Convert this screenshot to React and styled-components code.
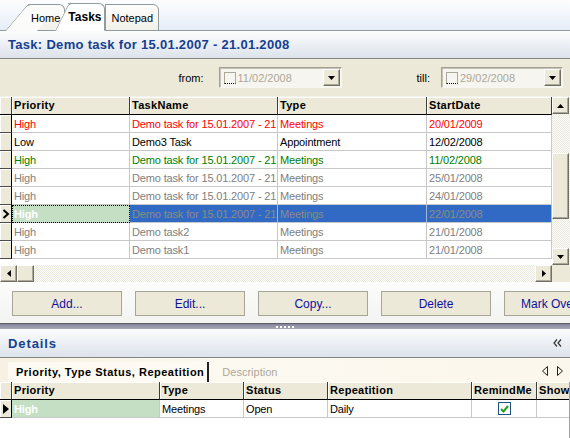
import React from 'react';
import styled, { createGlobalStyle, css } from 'styled-components';

const GlobalStyle = createGlobalStyle`
  body {
    margin: 0;
    font-family: "Liberation Sans", Arial, sans-serif;
    font-size: 11px;
    background: #fff;
  }
`;

const Window = styled.div`
  width: 570px;
  height: 438px;
  overflow: hidden;
  display: flex;
  flex-direction: column;
  background: #fff;
`;

/* ---------- document tabs ---------- */

const TabStrip = styled.div`
  height: 30px;
  flex-shrink: 0;
  display: flex;
  align-items: flex-end;
  padding-left: 28px;
  background: linear-gradient(#fdfdfe, #e6edf8);
  border-bottom: 1px solid #919b9c;
`;

const Tab = styled.div`
  position: relative;
  height: ${(p) => (p.$active ? 26 : 25)}px;
  margin-bottom: -1px;
  margin-left: ${(p) => p.$offset ?? 0}px;
  padding: 0 ${(p) => p.$padRight ?? 4}px 0 ${(p) => p.$padLeft ?? 3}px;
  display: flex;
  align-items: center;
  border: 1px solid #919b9c;
  border-left: ${(p) => (p.$reach ? 'none' : '1px solid #919b9c')};
  border-bottom: ${(p) => (p.$active ? '1px solid #fff' : '1px solid #919b9c')};
  border-radius: 0 6px 0 0;
  background: ${(p) => (p.$active ? '#fff' : 'linear-gradient(#fefefe, #f1f0ea)')};
  z-index: ${(p) => (p.$active ? 3 : p.$z || 1)};
  font-size: ${(p) => (p.$active ? 12 : 11)}px;
  font-weight: ${(p) => (p.$active ? 700 : 400)};
  color: #000;

  ${(p) =>
    p.$reach &&
    css`
      &::before {
        content: '';
        position: absolute;
        left: -${p.$reach}px;
        top: -1px;
        bottom: -1px;
        width: ${p.$reach + 8}px;
        background: ${p.$active ? '#fff' : '#fbfbf9'};
        border-left: 1px solid #919b9c;
        border-top: 1px solid #919b9c;
        border-top-left-radius: 4px;
        transform: skewX(-${Math.round((Math.atan(p.$reach / 27) * 180) / Math.PI)}deg);
        transform-origin: bottom left;
      }
    `}
`;

const TabLabel = styled.span`
  position: relative;
  z-index: 1;
`;

/* ---------- captions ---------- */

const Caption = styled.div`
  height: ${(p) => p.$h}px;
  flex-shrink: 0;
  display: flex;
  align-items: center;
  justify-content: space-between;
  padding: 0 8px;
  background: linear-gradient(#fbfcfd, #dde3ec);
  border-bottom: 1px solid #858585;
  color: #16408f;
  font-size: 13px;
  font-weight: 700;
`;

const CaptionText = styled.span`
  letter-spacing: ${(p) => p.$spacing || 0}px;
`;

/* ---------- filter ---------- */

const FilterBar = styled.div`
  height: 37px;
  flex-shrink: 0;
  display: flex;
  align-items: center;
  justify-content: flex-end;
  padding-right: 7px;
  background: #ece9d8;
`;

const FilterLabel = styled.span`
  margin-left: ${(p) => p.$gap || 0}px;
  margin-right: ${(p) => p.$right}px;
  font-size: 11px;
  color: #000;
`;

const DateBox = styled.div`
  width: ${(p) => p.$w}px;
  height: 21px;
  box-sizing: border-box;
  display: flex;
  align-items: center;
  padding: 0 1px 0 4px;
  background: #f6f5ef;
  border: 1px solid;
  border-color: #a3a196 #f7f6f1 #f7f6f1 #a3a196;
  box-shadow: inset 1px 1px 0 #c6c3b5;
  color: #aca899;
  font-size: 11px;
`;

const DateCheck = styled.span`
  width: 10px;
  height: 10px;
  margin-right: 2px;
  border: 1px solid #aca899;
  background: #f6f5ef;
  flex-shrink: 0;
  border-bottom: 1px dotted #000;
`;

const DateText = styled.span`
  flex: 1;
  padding-top: 1px;
`;

const bevel = css`
  box-sizing: border-box;
  background: #ece9d8;
  border: 1px solid;
  border-color: #fff #716f64 #716f64 #fff;
  box-shadow: inset -1px -1px 0 #aca899;
  display: flex;
  align-items: center;
  justify-content: center;
  flex-shrink: 0;
`;

const DropButton = styled.span`
  ${bevel};
  width: 17px;
  height: 17px;
`;

/* ---------- main grid ---------- */

const GridFrame = styled.div`
  height: 186px;
  flex-shrink: 0;
  display: flex;
  flex-direction: column;
  border-top: 1px solid #f2f1ea;
  box-sizing: border-box;
`;

const GridBody = styled.div`
  height: 168px;
  display: flex;
`;

const Table = styled.div`
  width: ${(p) => p.$w}px;
  background: #fff;
  overflow: hidden;
  flex-shrink: 0;
`;

const Row = styled.div`
  display: grid;
  grid-template-columns: ${(p) => p.$cols};
  height: 18px;
`;

const HeaderCell = styled.div`
  box-sizing: border-box;
  height: 18px;
  padding: 0 2px;
  line-height: 17px;
  font-weight: 700;
  font-size: 11px;
  letter-spacing: 0.3px;
  color: #000;
  background: #ece9d8;
  border-right: 1px solid #3c3c3c;
  border-bottom: 1px solid #000;
  box-shadow: inset 1px 1px 0 #fff;
  white-space: nowrap;
  overflow: hidden;
`;

const RowHead = styled.div`
  box-sizing: border-box;
  height: 18px;
  background: #ece9d8;
  border-right: 1px solid #000;
  border-bottom: 1px solid #4a4a4a;
  box-shadow: inset 1px 1px 0 #fff;
  display: flex;
  align-items: center;
  justify-content: center;
`;

const Cell = styled.div`
  box-sizing: border-box;
  height: 18px;
  padding: 0 ${(p) => (p.$center ? 0 : 2)}px;
  line-height: 18px;
  font-size: 11px;
  white-space: nowrap;
  overflow: hidden;
  border-right: 1px solid #c8c8c8;
  border-bottom: 1px solid #c8c8c8;
  color: ${(p) => p.$color || '#000'};
  background: #fff;
  letter-spacing: -0.15px;
  ${(p) => p.$center && css`display: flex; align-items: center; justify-content: center;`}

  ${(p) =>
    p.$mode === 'focus' &&
    css`
      background: #c4dfc4;
      color: #fff;
      font-weight: 700;
      outline: 1px dotted #000;
      outline-offset: -1px;
    `}
  ${(p) =>
    p.$mode === 'green' &&
    css`
      background: #c4dfc4;
      color: #fff;
      font-weight: 700;
    `}
  ${(p) =>
    p.$mode === 'selected' &&
    css`
      background: #316ac5;
      color: #8e8a80;
      border-right-color: #9fb6dd;
    `}
`;

const VScroll = styled.div`
  width: 18px;
  display: flex;
  flex-direction: column;
  background-color: #f5f4ee;
  background-image: repeating-conic-gradient(#ebe9dc 0 25%, #fdfdfb 0 50%);
  background-size: 2px 2px;
  flex-shrink: 0;
`;

const ScrollBtn = styled.div`
  ${bevel};
  width: 17px;
  height: 17px;
`;

const Thumb = styled.div`
  ${bevel};
  width: ${(p) => p.$w}px;
  height: ${(p) => p.$h}px;
  margin: ${(p) => p.$m};
`;

const Spacer = styled.div`
  flex: 1;
`;

const HScroll = styled.div`
  height: 17px;
  display: flex;
  background-color: #f5f4ee;
  background-image: repeating-conic-gradient(#ebe9dc 0 25%, #fdfdfb 0 50%);
  background-size: 2px 2px;
`;

const Corner = styled.div`
  width: 18px;
  background: #ece9d8;
  flex-shrink: 0;
`;

/* ---------- buttons ---------- */

const ButtonBar = styled.div`
  height: 41px;
  flex-shrink: 0;
  display: flex;
  align-items: center;
  gap: 13px;
  padding: 2px 0 0 12px;
  box-sizing: border-box;
  background: linear-gradient(#fcfcfb, #f3f3f1);
`;

const ActionButton = styled.button`
  width: 110px;
  height: 25px;
  flex-shrink: 0;
  padding: 0;
  background: #ece9d8;
  border: 1px solid #a7a597;
  color: #10109a;
  font-family: "Liberation Sans", Arial, sans-serif;
  font-size: 12px;
  white-space: nowrap;
  overflow: hidden;
`;

const Splitter = styled.div`
  height: 6px;
  flex-shrink: 0;
  display: flex;
  justify-content: center;
  align-items: center;
  gap: 2px;
  border-top: 1px solid #5e5d68;
  background: linear-gradient(#85839b, #a9a8bb);
  box-sizing: border-box;
`;

const Grip = styled.span`
  width: 2px;
  height: 2px;
  background: #fff;
`;

/* ---------- detail tabs ---------- */

const SubTabs = styled.div`
  height: 24px;
  flex-shrink: 0;
  display: flex;
  align-items: flex-end;
  padding-left: 8px;
  background: linear-gradient(90deg, #f6f1e2, #fcf9f1 40%, #fbf7ec);
`;

const SubTab = styled.div`
  height: 20px;
  display: flex;
  align-items: center;
  padding: 0 ${(p) => (p.$active ? 3 : 12)}px 0 ${(p) => (p.$active ? 8 : 13)}px;
  font-size: 11px;
  font-weight: ${(p) => (p.$active ? 700 : 400)};
  letter-spacing: ${(p) => (p.$active ? 0.5 : 0)}px;
  color: ${(p) => (p.$active ? '#000' : '#aca899')};
  background: ${(p) => (p.$active ? '#fcfaf3' : 'transparent')};
  border-right: ${(p) => (p.$active ? '2px solid #222' : 'none')};
`;

const TabNav = styled.div`
  margin-left: auto;
  height: 22px;
  display: flex;
  align-items: center;
  gap: 9px;
  padding-right: 7px;
`;

const DetailGrid = styled.div`
  flex: 1;
  background: #fff;
  border-right: 1px solid #a0a0a0;
  width: 569px;
  overflow: hidden;
`;

const CheckBox = styled.span`
  width: 11px;
  height: 11px;
  border: 1px solid #1c5180;
  background: #fff;
  display: flex;
  align-items: center;
  justify-content: center;
`;

/* ---------- little drawings ---------- */

const ArrowDown = () => (
  <svg width="7" height="4" viewBox="0 0 7 4">
    <polygon points="0,0 7,0 3.5,4" fill="#000" />
  </svg>
);
const ArrowUp = () => (
  <svg width="7" height="4" viewBox="0 0 7 4">
    <polygon points="0,4 7,4 3.5,0" fill="#000" />
  </svg>
);
const ArrowLeft = () => (
  <svg width="4" height="7" viewBox="0 0 4 7">
    <polygon points="4,0 4,7 0,3.5" fill="#000" />
  </svg>
);
const ArrowRight = () => (
  <svg width="4" height="7" viewBox="0 0 4 7">
    <polygon points="0,0 0,7 4,3.5" fill="#000" />
  </svg>
);
const CurrentRow = () => (
  <svg width="8" height="10" viewBox="0 0 8 10">
    <polyline points="1.5,1 6,5 1.5,9" fill="none" stroke="#000" strokeWidth="2" />
  </svg>
);
const RowPointer = () => (
  <svg width="6" height="10" viewBox="0 0 6 10">
    <polygon points="0,0 6,5 0,10" fill="#000" />
  </svg>
);
const Collapse = () => (
  <svg width="9" height="8" viewBox="0 0 9 8">
    <polyline points="4,0.5 1,4 4,7.5" fill="none" stroke="#333" strokeWidth="1.2" />
    <polyline points="8,0.5 5,4 8,7.5" fill="none" stroke="#333" strokeWidth="1.2" />
  </svg>
);
const NavTri = ({ dir }) => (
  <svg width="6" height="10" viewBox="0 0 6 10">
    <polygon
      points={dir === 'left' ? '5.5,0.5 5.5,9.5 0.5,5' : '0.5,0.5 0.5,9.5 5.5,5'}
      fill="none"
      stroke="#222"
    />
  </svg>
);
const Tick = () => (
  <svg width="9" height="8" viewBox="0 0 9 8">
    <polyline points="1,4 3.5,6.5 8,1" fill="none" stroke="#21a121" strokeWidth="2" />
  </svg>
);

/* ---------- data ---------- */

const mainCols = '12px 118px 148px 149px 125px';
const detailCols = '12px 148px 84px 84px 144px 65px 40px';

const RED = '#ff0000';
const GREEN = '#008000';
const GRAY = '#808080';
const LONG = 'Demo task for 15.01.2007 - 21.01.2008';

const tasks = [
  { p: 'High', n: LONG, t: 'Meetings', d: '20/01/2009', c: RED },
  { p: 'Low', n: 'Demo3 Task', t: 'Appointment', d: '12/02/2008', c: '#000' },
  { p: 'High', n: LONG, t: 'Meetings', d: '11/02/2008', c: GREEN },
  { p: 'High', n: LONG, t: 'Meetings', d: '25/01/2008', c: GRAY },
  { p: 'High', n: LONG, t: 'Meetings', d: '24/01/2008', c: GRAY },
  { p: 'High', n: LONG, t: 'Meetings', d: '22/01/2008', c: GRAY, current: true },
  { p: 'High', n: 'Demo task2', t: 'Meetings', d: '21/01/2008', c: GRAY },
  { p: 'High', n: 'Demo task1', t: 'Meetings', d: '21/01/2008', c: GRAY },
];

const DateField = ({ value, width }) => (
  <DateBox $w={width}>
    <DateCheck />
    <DateText>{value}</DateText>
    <DropButton>
      <ArrowDown />
    </DropButton>
  </DateBox>
);

const App = () => (
  <Window>
    <GlobalStyle />

    <TabStrip>
      <Tab $reach={23} $z={1} $padRight={4}>
        <TabLabel>Home</TabLabel>
      </Tab>
      <Tab $reach={13} $active $offset={3} $padLeft={0} $padRight={3}>
        <TabLabel>Tasks</TabLabel>
      </Tab>
      <Tab $z={2} $padLeft={5} $padRight={5}>
        <TabLabel>Notepad</TabLabel>
      </Tab>
    </TabStrip>

    <Caption $h={27}>
      <CaptionText $spacing={0.3}>Task: Demo task for 15.01.2007 - 21.01.2008</CaptionText>
    </Caption>

    <FilterBar>
      <FilterLabel $right={15}>from:</FilterLabel>
      <DateField value="11/02/2008" width={123} />
      <FilterLabel $gap={75} $right={11}>till:</FilterLabel>
      <DateField value="29/02/2008" width={122} />
    </FilterBar>

    <GridFrame>
      <GridBody>
        <Table $w={552}>
          <Row $cols={mainCols}>
            <HeaderCell />
            <HeaderCell>Priority</HeaderCell>
            <HeaderCell>TaskName</HeaderCell>
            <HeaderCell>Type</HeaderCell>
            <HeaderCell>StartDate</HeaderCell>
          </Row>
          {tasks.map((r, i) => (
            <Row key={i} $cols={mainCols}>
              <RowHead>{r.current && <CurrentRow />}</RowHead>
              <Cell $color={r.c} $mode={r.current ? 'focus' : undefined}>{r.p}</Cell>
              <Cell $color={r.c} $mode={r.current ? 'selected' : undefined}>{r.n}</Cell>
              <Cell $color={r.c} $mode={r.current ? 'selected' : undefined}>{r.t}</Cell>
              <Cell $color={r.c} $mode={r.current ? 'selected' : undefined}>{r.d}</Cell>
            </Row>
          ))}
        </Table>
        <VScroll>
          <ScrollBtn>
            <ArrowUp />
          </ScrollBtn>
          <Thumb $w={17} $h={66} $m="39px 0 0 0" />
          <Spacer />
          <ScrollBtn>
            <ArrowDown />
          </ScrollBtn>
        </VScroll>
      </GridBody>
      <HScroll>
        <ScrollBtn>
          <ArrowLeft />
        </ScrollBtn>
        <Thumb $w={17} $h={17} $m="0" />
        <Spacer />
        <ScrollBtn>
          <ArrowRight />
        </ScrollBtn>
        <Corner />
      </HScroll>
    </GridFrame>

    <ButtonBar>
      <ActionButton>Add...</ActionButton>
      <ActionButton>Edit...</ActionButton>
      <ActionButton>Copy...</ActionButton>
      <ActionButton>Delete</ActionButton>
      <ActionButton>Mark Overdue</ActionButton>
    </ButtonBar>

    <Splitter>
      <Grip />
      <Grip />
      <Grip />
      <Grip />
      <Grip />
    </Splitter>

    <Caption $h={28}>
      <CaptionText $spacing={0.9}>Details</CaptionText>
      <Collapse />
    </Caption>

    <SubTabs>
      <SubTab $active>Priority, Type Status, Repeatition</SubTab>
      <SubTab>Description</SubTab>
      <TabNav>
        <NavTri dir="left" />
        <NavTri dir="right" />
      </TabNav>
    </SubTabs>

    <DetailGrid>
      <Row $cols={detailCols}>
        <HeaderCell />
        <HeaderCell>Priority</HeaderCell>
        <HeaderCell>Type</HeaderCell>
        <HeaderCell>Status</HeaderCell>
        <HeaderCell>Repeatition</HeaderCell>
        <HeaderCell>RemindMe</HeaderCell>
        <HeaderCell>Show</HeaderCell>
      </Row>
      <Row $cols={detailCols}>
        <RowHead>
          <RowPointer />
        </RowHead>
        <Cell $mode="green">High</Cell>
        <Cell>Meetings</Cell>
        <Cell>Open</Cell>
        <Cell>Daily</Cell>
        <Cell $center>
          <CheckBox>
            <Tick />
          </CheckBox>
        </Cell>
        <Cell />
      </Row>
    </DetailGrid>
  </Window>
);

export default App;
